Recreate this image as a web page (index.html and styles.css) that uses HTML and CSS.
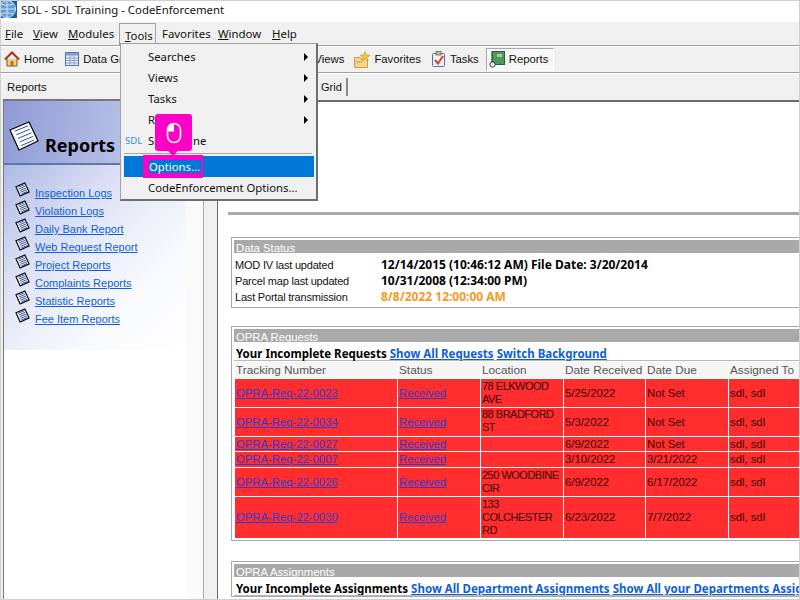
FILE: index.html
```html
<!DOCTYPE html>
<html lang="en">
<head>
    <meta charset="UTF-8">
    <title>SDL - SDL Training - CodeEnforcement</title>
    <link rel="stylesheet" href="styles.css">
</head>
<body>
    <svg class="icon-defs" width="0" height="0">
        <defs>
            <g id="report-page">
                <path d="M1 5 L10.5 1 L15 10.5 L5.5 15 Z" fill="#fff" stroke="#000" stroke-width="1.2" vector-effect="non-scaling-stroke"/>
                <path d="M3.4 5.6 L10 2.9 M4.2 7.4 L10.9 4.6 M5 9.2 L11.8 6.4 M5.8 11 L12.6 8.2 M6.6 12.8 L13.2 10" stroke="#2a4fb0" stroke-width="1" vector-effect="non-scaling-stroke"/>
            </g>
        </defs>
    </svg>

    <div class="window">
        <div class="title-bar">
            <svg class="app-icon" width="16" height="17" viewBox="0 0 16 17">
                <rect width="16" height="17" fill="#1f5f9f"/>
                <circle cx="6" cy="8" r="8.5" fill="#5f9fd8" stroke="#cfe2f5"/>
                <path d="M6 0 V17 M-3 8 H15 M0 3 Q6 6 12 3 M0 13 Q6 10 12 13" stroke="#cfe2f5" fill="none"/>
            </svg>
            <span>SDL - SDL Training - CodeEnforcement</span>
        </div>

        <div class="menu-bar">
            <span class="menu-item menu-file"><u>F</u>ile</span>
            <span class="menu-item menu-view"><u>V</u>iew</span>
            <span class="menu-item menu-modules"><u>M</u>odules</span>
            <span class="menu-item menu-open"><u>T</u>ools</span>
            <span class="menu-item menu-fav">Favorites</span>
            <span class="menu-item menu-window"><u>W</u>indow</span>
            <span class="menu-item"><u>H</u>elp</span>
        </div>

        <div class="tool-bar">
            <span class="tool tool-home">
                <svg width="16" height="16" viewBox="0 0 16 16">
                    <path d="M3 8 V15 H13 V8" fill="#f3d27a" stroke="#7a5a1e"/>
                    <rect x="6.5" y="10" width="3" height="5" fill="#b5742a"/>
                    <path d="M1 8.5 L8 1.5 L15 8.5" fill="none" stroke="#b02a1e" stroke-width="2"/>
                </svg>
                Home
            </span>
            <span class="tool tool-grid">
                <svg width="14" height="14" viewBox="0 0 14 14">
                    <rect x="0.5" y="0.5" width="13" height="13" fill="#e8effa" stroke="#5577aa"/>
                    <rect x="1" y="1" width="12" height="2.5" fill="#7f9fd0"/>
                    <path d="M1 6 H13 M1 8.5 H13 M1 11 H13 M5 3 V13 M9 3 V13" stroke="#8aa3c8"/>
                </svg>
                Data Grid
            </span>
            <span class="tool tool-views">Views</span>
            <span class="tool tool-fav">
                <svg width="16" height="17" viewBox="0 0 16 17">
                    <path d="M0.5 6.5 H6 L7 8 H13.5 V16.5 H0.5 Z" fill="#f6d48c" stroke="#c49a4a"/>
                    <path d="M11 0.5 L12.5 4 L15.8 4.3 L13.3 6.6 L14 10 L11 8.2 L8 10 L8.7 6.6 L6.2 4.3 L9.5 4 Z" fill="#f5c242" stroke="#c49a4a" stroke-width="0.7"/>
                    <path d="M2 11 H8" stroke="#c49a4a"/>
                </svg>
                Favorites
            </span>
            <span class="tool tool-tasks">
                <svg width="14" height="16" viewBox="0 0 14 16">
                    <rect x="0.5" y="2.5" width="12" height="13" rx="1" fill="#eef1f8" stroke="#5a6f99"/>
                    <rect x="4" y="0.5" width="5" height="3.5" fill="#c9b58a" stroke="#6b5a3a" stroke-width="0.7"/>
                    <path d="M3 9 L6 12.5 L11 5" fill="none" stroke="#d8442a" stroke-width="2"/>
                </svg>
                Tasks
            </span>
            <span class="tool tool-reports">
                <svg width="16" height="17" viewBox="0 0 16 17">
                    <rect x="3" y="0.5" width="12.5" height="13" fill="#4f9a5a" stroke="#2a5f35"/>
                    <rect x="8" y="3" width="5" height="3" fill="#a5d0a8"/>
                    <path d="M3 2 V13" stroke="#222" stroke-dasharray="1 1"/>
                    <circle cx="3.5" cy="13.5" r="2.6" fill="#fff" stroke="#333"/>
                </svg>
                Reports
            </span>
        </div>

        <div class="main">
            <div class="side-col">
                <div class="side-tab">Reports</div>
                <div class="side-panel">
                    <div class="side-head">
                        <svg width="32" height="32" viewBox="0 0 16 16"><use href="#report-page"/></svg>
                        <span>Reports</span>
                    </div>
                    <div class="side-body">
                        <ul class="report-list">
                            <li><svg width="15" height="15" viewBox="0 0 16 16"><use href="#report-page"/></svg><a>Inspection Logs</a></li>
                            <li><svg width="15" height="15" viewBox="0 0 16 16"><use href="#report-page"/></svg><a>Violation Logs</a></li>
                            <li><svg width="15" height="15" viewBox="0 0 16 16"><use href="#report-page"/></svg><a>Daily Bank Report</a></li>
                            <li><svg width="15" height="15" viewBox="0 0 16 16"><use href="#report-page"/></svg><a>Web Request Report</a></li>
                            <li><svg width="15" height="15" viewBox="0 0 16 16"><use href="#report-page"/></svg><a>Project Reports</a></li>
                            <li><svg width="15" height="15" viewBox="0 0 16 16"><use href="#report-page"/></svg><a>Complaints Reports</a></li>
                            <li><svg width="15" height="15" viewBox="0 0 16 16"><use href="#report-page"/></svg><a>Statistic Reports</a></li>
                            <li><svg width="15" height="15" viewBox="0 0 16 16"><use href="#report-page"/></svg><a>Fee Item Reports</a></li>
                        </ul>
                    </div>
                </div>
            </div>

            <div class="splitter"></div>

            <div class="content-col">
                <div class="tab-strip"><span class="grid-tab">Grid</span></div>
                <div class="content">
                    <div class="rule"></div>

                    <div class="box box-status">
                        <div class="box-title">Data Status</div>
                        <div class="status-row"><span class="status-label">MOD IV last updated</span><b>12/14/2015 (10:46:12 AM) File Date: 3/20/2014</b></div>
                        <div class="status-row"><span class="status-label">Parcel map last updated</span><b>10/31/2008 (12:34:00 PM)</b></div>
                        <div class="status-row"><span class="status-label">Last Portal transmission</span><b class="orange">8/8/2022 12:00:00 AM</b></div>
                    </div>

                    <div class="box box-requests">
                        <div class="box-title">OPRA Requests</div>
                        <div class="box-line"><b>Your Incomplete Requests</b> <a>Show All Requests</a> <a>Switch Background</a></div>
                        <table class="req-table">
                            <thead>
                                <tr><th>Tracking Number</th><th>Status</th><th>Location</th><th>Date Received</th><th>Date Due</th><th>Assigned To</th></tr>
                            </thead>
                            <tbody>
                                <tr class="row-2"><td><a>OPRA-Req-22-0023</a></td><td><a>Received</a></td><td>78 ELKWOOD AVE</td><td>5/25/2022</td><td>Not Set</td><td>sdl, sdl</td></tr>
                                <tr class="row-2"><td><a>OPRA-Req-22-0034</a></td><td><a>Received</a></td><td class="top">88 BRADFORD ST</td><td>5/3/2022</td><td>Not Set</td><td>sdl, sdl</td></tr>
                                <tr class="row-1"><td><a>OPRA-Req-22-0027</a></td><td><a>Received</a></td><td></td><td>6/9/2022</td><td>Not Set</td><td>sdl, sdl</td></tr>
                                <tr class="row-1b"><td><a>OPRA-Req-22-0007</a></td><td><a>Received</a></td><td></td><td>3/10/2022</td><td>3/21/2022</td><td>sdl, sdl</td></tr>
                                <tr class="row-2"><td><a>OPRA-Req-22-0026</a></td><td><a>Received</a></td><td>250 WOODBINE CIR</td><td>6/9/2022</td><td>6/17/2022</td><td>sdl, sdl</td></tr>
                                <tr class="row-3"><td><a>OPRA-Req-22-0030</a></td><td><a>Received</a></td><td>133 COLCHESTER RD</td><td>6/23/2022</td><td>7/7/2022</td><td>sdl, sdl</td></tr>
                            </tbody>
                        </table>
                    </div>

                    <div class="box box-assign">
                        <div class="box-title">OPRA Assignments</div>
                        <div class="box-line nowrap"><b>Your Incomplete Assignments</b> <a>Show All Department Assignments</a> <a>Show All your Departments Assignments</a></div>
                    </div>
                </div>
            </div>
        </div>
    </div>

    <div class="tools-menu">
        <div class="tools-row has-sub">Searches</div>
        <div class="tools-row has-sub">Views</div>
        <div class="tools-row has-sub">Tasks</div>
        <div class="tools-row has-sub">Reports</div>
        <div class="tools-row"><span class="sdl-mark">SDL</span>SDL Online</div>
        <div class="tools-sep"></div>
        <div class="tools-row tools-active"><span class="options-mark"><span>Options...</span></span></div>
        <div class="tools-row">CodeEnforcement Options...</div>
    </div>

    <div class="callout">
        <svg width="16" height="22" viewBox="0 0 16 22">
            <rect x="1.5" y="1.5" width="13" height="19" rx="6.5" fill="none" stroke="#fff" stroke-width="1.6"/>
            <path d="M8 1.5 A6.5 6.5 0 0 0 1.5 8 V9.5 H8 Z" fill="#fff"/>
        </svg>
    </div>
</body>
</html>
```

FILE: styles.css
```css
html, body {
    margin: 0;
    padding: 0;
    height: 100%;
    overflow: hidden;
}

body {
    font-family: "Liberation Sans", Arial, sans-serif;
    font-size: 11px;
    color: #111;
    background-color: #fff;
}

.icon-defs {
    position: absolute;
}

.window {
    width: 800px;
    height: 600px;
    box-sizing: border-box;
    border: 1px solid #cfcfcf;
    display: flex;
    flex-direction: column;
    overflow: hidden;
}

.title-bar {
    height: 21px;
    flex: none;
    display: flex;
    align-items: flex-start;
    gap: 4px;
    font-family: "Noto Sans", sans-serif;
    font-size: 11.4px;
    line-height: 17px;
    color: #111;
    background-color: #fff;
}

.menu-bar {
    height: 23px;
    flex: none;
    display: flex;
    align-items: center;
    padding-left: 4px;
    font-family: "Noto Sans", sans-serif;
    font-size: 11.4px;
    background-color: #f0f0f0;
    border-bottom: 1px solid #a0a0a0;
}

.menu-file { width: 28px; }
.menu-view { width: 35px; }
.menu-modules { width: 51px; }
.menu-fav { width: 56px; }
.menu-window { width: 54px; }

.menu-open {
    width: 37px;
    height: 22px;
    line-height: 24px;
    box-sizing: border-box;
    padding-left: 5px;
    margin-right: 6px;
    border: 1px solid #a0a0a0;
    border-bottom: none;
}

.tool-bar {
    height: 27px;
    flex: none;
    display: flex;
    align-items: center;
    padding-bottom: 1px;
    box-sizing: border-box;
    font-size: 11.3px;
    background-color: #f0f0f0;
    border-top: 1px solid #fff;
    border-bottom: 1px solid #a0a0a0;
}

.tool {
    display: flex;
    align-items: center;
    gap: 4px;
    flex: none;
}

.tool-home { margin-left: 3px; }
.tool-grid { margin-left: 11px; }
.tool-views { margin-left: 183px; }
.tool-fav { margin-left: 10px; }
.tool-tasks { margin-left: 11px; }

.tool-reports {
    margin-left: 7px;
    height: 21px;
    padding: 0 5px 0 2px;
    border: 1px solid #a8a8a8;
    border-right-color: #fff;
    border-bottom-color: #fff;
    background-color: #f7f7f7;
}

.main {
    flex: 1;
    display: flex;
    min-height: 0;
    background-color: #f0f0f0;
}

.side-col {
    width: 203px;
    flex: none;
    display: flex;
    flex-direction: column;
}

.side-tab {
    height: 25px;
    line-height: 26px;
    padding-left: 6px;
    font-size: 11.3px;
    border-top: 1px solid #fff;
}

.side-panel {
    flex: 1;
    margin-left: 2px;
    background: linear-gradient(90deg, #fff 182px, #fafafa 182px);
    border-left: 1px solid #777;
    border-right: 1px solid #aaa;
    border-top: 2px solid #777;
}

.side-head {
    height: 64px;
    box-sizing: border-box;
    display: flex;
    align-items: center;
    gap: 5px;
    padding: 20px 0 0 4px;
    font-family: "Noto Sans", sans-serif;
    font-size: 18px;
    font-weight: 700;
    color: #000;
    background: linear-gradient(100deg, #8f9ad6, #b5c0e6 60%, #c8d2ee);
    border-bottom: 2px solid #5b78a8;
}

.side-head svg {
    flex: none;
    margin-top: -12px;
}

.side-head span {
    margin-top: 5px;
}

.side-body {
    width: 182px;
    height: 185px;
    padding-top: 22px;
    box-sizing: border-box;
    background: linear-gradient(135deg, #aeb8e4 0%, #d8ddf3 30%, #ebeef9 50%, #f8f9fd 70%, #fff 100%);
}

.report-list {
    list-style: none;
    margin: 0;
    padding: 0 0 0 11px;
}

.report-list li {
    height: 18px;
    display: flex;
    gap: 5px;
}

.report-list svg {
    flex: none;
    margin-top: -5px;
}

a {
    color: #0f5fd6;
    text-decoration: underline;
}

.splitter {
    width: 13px;
    flex: none;
}

.content-col {
    flex: 1;
    min-width: 0;
    display: flex;
    flex-direction: column;
}

.tab-strip {
    height: 29px;
    flex: none;
    box-sizing: border-box;
    margin-left: -13px;
    border-top: 1px solid #fff;
    border-bottom: 2px solid #6b6b6b;
    display: flex;
}

.grid-tab {
    margin-left: 117px;
    height: 18px;
    margin-top: 4px;
    line-height: 18px;
    padding-right: 4px;
    border-right: 2px solid #8a8a8a;
}

.content {
    flex: 1;
    min-height: 0;
    background-color: #fff;
    border-left: 1px solid #6b6b6b;
    padding: 110px 0 0 10px;
    overflow: hidden;
}

.rule {
    height: 3px;
    background-color: #a9a9a9;
    margin-bottom: 22px;
}

.box {
    box-sizing: border-box;
    margin-left: 3px;
    padding: 2px 0 0 2px;
    border: 1px solid #aaa;
    border-right: none;
}

.box-status {
    height: 71px;
    margin-bottom: 18px;
}

.box-requests {
    height: 215px;
    margin-bottom: 20px;
}

.box-title {
    height: 13px;
    line-height: 16px;
    padding-left: 2px;
    font-size: 11.3px;
    color: #fff;
    background-color: #a9a9a9;
}

.status-row {
    height: 16px;
    line-height: 16px;
    padding-left: 1px;
    white-space: nowrap;
    display: flex;
}

.status-row b {
    font-family: "Noto Sans", sans-serif;
    font-size: 12px;
    color: #000;
}

.status-row:nth-child(2) {
    margin-top: 4px;
}

.status-label {
    width: 146px;
    flex: none;
    letter-spacing: -0.2px;
}

.status-row b.orange {
    color: #f59a1c;
}

.box-line {
    height: 16px;
    line-height: 20px;
    padding: 2px 0 0 2px;
    white-space: nowrap;
    font-family: "Noto Sans", sans-serif;
    font-size: 11.5px;
    border-bottom: 1px solid #b8b8b8;
}

.box-line b {
    color: #000;
}

.box-line a {
    font-weight: 700;
}

.req-table {
    border-collapse: separate;
    border-spacing: 1px;
    table-layout: fixed;
    width: 572px;
}

.req-table th:nth-child(1) { width: 161px; }
.req-table th:nth-child(2) { width: 81px; }
.req-table th:nth-child(3) { width: 81px; }
.req-table th:nth-child(4) { width: 80px; }
.req-table th:nth-child(5) { width: 81px; }

.req-table th {
    height: 16px;
    padding: 0 0 0 1px;
    font-size: 11.8px;
    font-weight: 400;
    text-align: left;
    color: #555;
    background-color: #f5f5f5;
}

.req-table td {
    padding: 0 0 0 1px;
    font-size: 11.3px;
    line-height: 13px;
    color: #3a0808;
    background-color: #ff2d2d;
}

.req-table td:nth-child(3) {
    font-size: 11px;
    letter-spacing: -0.5px;
}

.req-table td.top {
    vertical-align: top;
}

.req-table td a {
    color: #2b3fd4;
}

.row-2 td { height: 28px; }
.row-1 td { height: 14px; }
.row-1b td { height: 15px; }
.row-3 td { height: 41px; }

.nowrap {
    overflow: hidden;
}

/* open Tools menu, lies over the panels */
.tools-menu {
    position: absolute;
    left: 120px;
    top: 43px;
    width: 198px;
    height: 158px;
    box-sizing: border-box;
    padding: 2px 2px 0 3px;
    font-family: "Noto Sans", sans-serif;
    font-size: 11.3px;
    background-color: #f0f0f0;
    border: 1px solid #a0a0a0;
    border-right: 2px solid #6e6e6e;
    border-bottom: 2px solid #6e6e6e;
}

.tools-row {
    position: relative;
    height: 21px;
    line-height: 21px;
    padding-left: 24px;
    white-space: nowrap;
}

.has-sub::after {
    content: "";
    position: absolute;
    right: 6px;
    top: 7px;
    border-left: 4px solid #000;
    border-top: 4px solid transparent;
    border-bottom: 4px solid transparent;
}

.sdl-mark {
    position: absolute;
    left: 1px;
    font-size: 9.5px;
    color: #1f9be0;
}

.tools-sep {
    height: 1px;
    margin: 2px 2px 2px 0;
    background-color: #a8a8a8;
}

.tools-active {
    background-color: #0078d7;
}

.options-mark {
    position: absolute;
    left: 19px;
    top: -1px;
    width: 60px;
    height: 23px;
    box-sizing: border-box;
    padding: 5px 0 0 6px;
    line-height: 13px;
    background-color: #ff00c8;
}

.options-mark span {
    display: inline-block;
    padding-right: 1px;
    color: #fff;
    background-color: #0078d7;
}

.callout {
    position: absolute;
    left: 155px;
    top: 114px;
    width: 37px;
    height: 37px;
    border-radius: 3px;
    display: flex;
    align-items: flex-start;
    justify-content: center;
    padding-top: 8px;
    box-sizing: border-box;
    background-color: #ff00c8;
}

.callout::after {
    content: "";
    position: absolute;
    left: 13px;
    top: 37px;
    border-top: 5px solid #ff00c8;
    border-left: 5px solid transparent;
    border-right: 5px solid transparent;
}
```
